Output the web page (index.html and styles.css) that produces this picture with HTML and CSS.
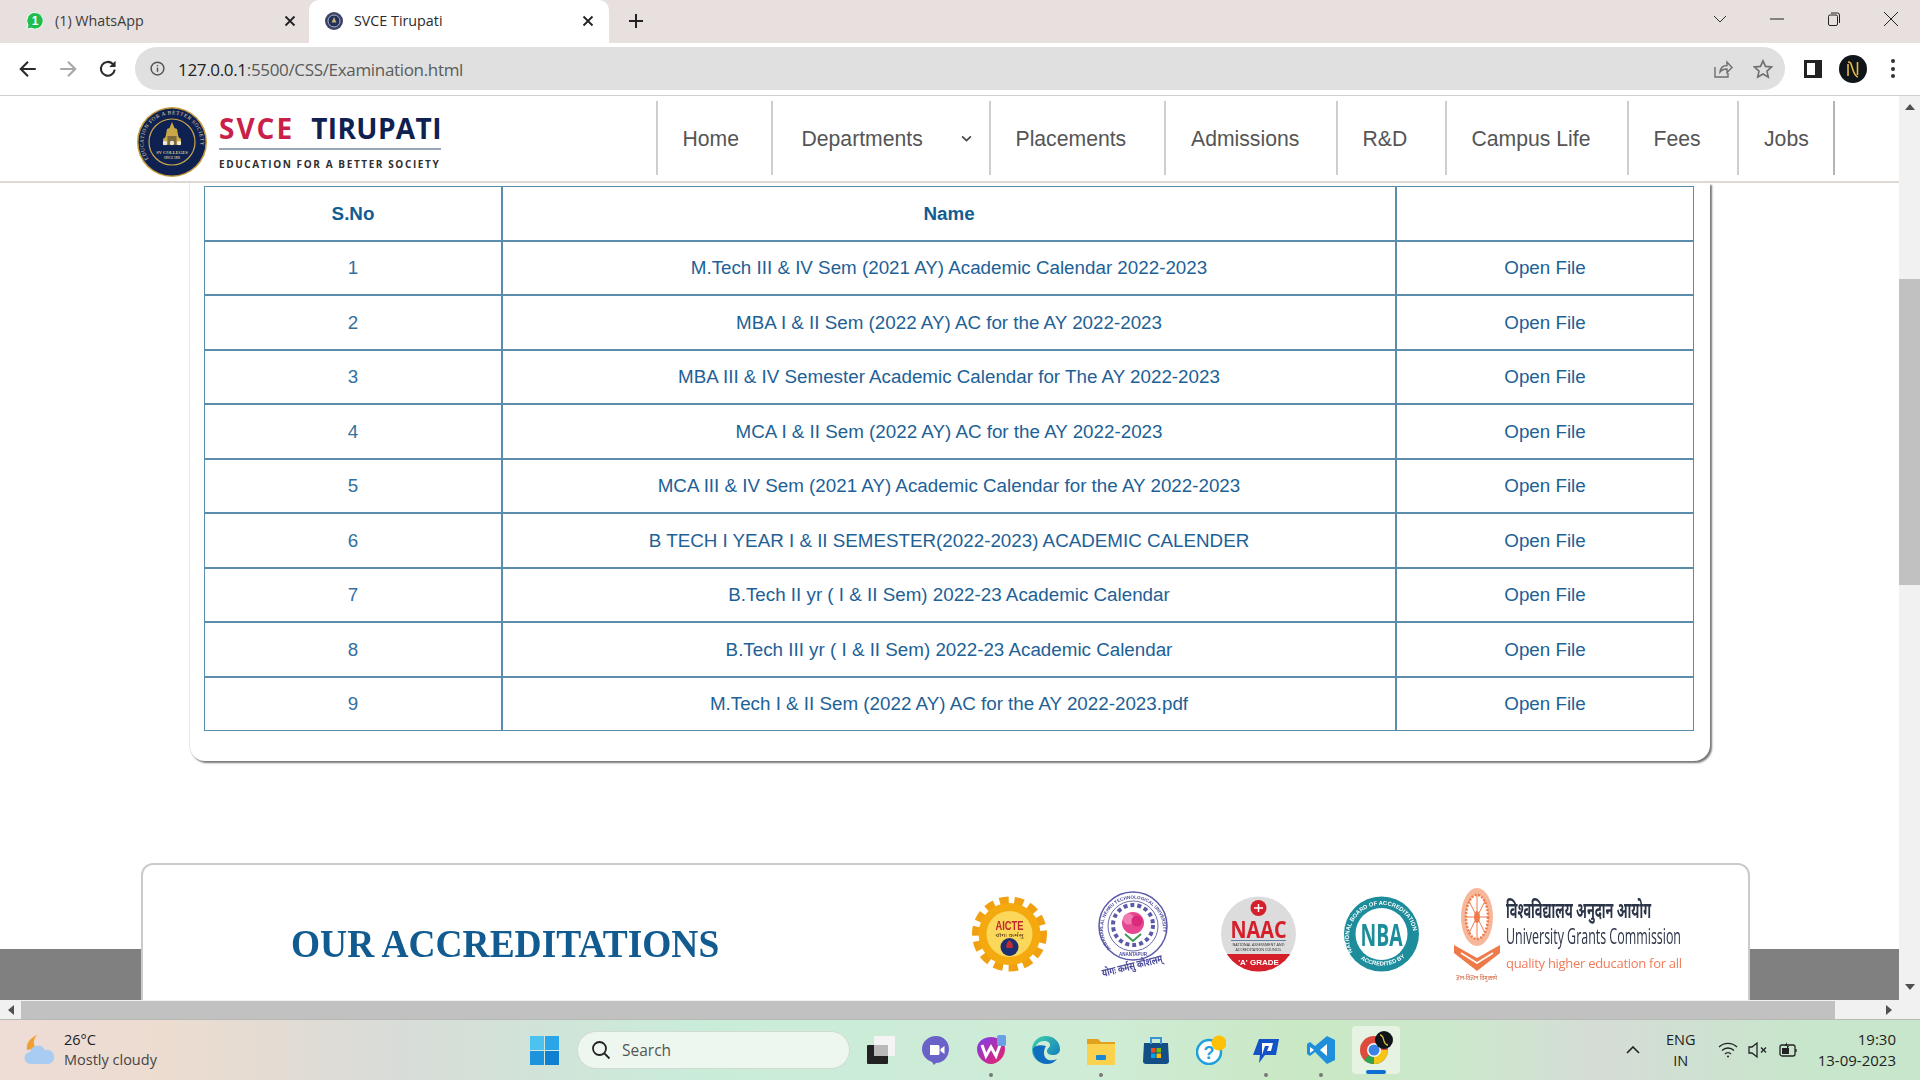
FILE: index.html
```html
<!DOCTYPE html>
<html lang="en">
<head>
<meta charset="utf-8">
<title>SVCE Tirupati</title>
<link rel="stylesheet" href="styles.css">
</head>
<body>
<div class="screen">
  <div class="tabstrip">
    <div class="tab tab-idle">
      <svg class="fav" viewBox="0 0 18 18"><path d="M9 .5a8.300 8.300 0 0 0-7 12.700L.8 17.300l4.200-1.200A8.300 8.300 0 1 0 9 .5z" fill="#1fbd4e" stroke="#f4fbf6" stroke-width="1"/><text x="9" y="13" class="fav-num">1</text></svg>
      <span class="tab-title">(1) WhatsApp</span>
      <svg class="tab-x" viewBox="0 0 12 12"><path d="M1.500 1.500l9 9M10.500 1.500l-9 9"/></svg>
    </div>
    <div class="tab tab-active">
      <svg class="fav" viewBox="0 0 18 18"><circle cx="9" cy="9" r="9" fill="#3b4568"/><circle cx="9" cy="9" r="6" fill="#22305a" stroke="#aab0c4" stroke-width="1"/><path d="M9 5l2.400 5.500H6.600z" fill="#c9b27a"/></svg>
      <span class="tab-title">SVCE Tirupati</span>
      <svg class="tab-x" viewBox="0 0 12 12"><path d="M1.500 1.500l9 9M10.500 1.500l-9 9"/></svg>
    </div>
    <svg class="tab-plus" viewBox="0 0 16 16"><path d="M8 1v14M1 8h14"/></svg>
    <div class="win">
      <svg class="win-caret" viewBox="0 0 14 8"><path d="M1 1l6 6 6-6"/></svg>
      <svg class="win-btn" viewBox="0 0 14 14"><path d="M0 7h14"/></svg>
      <svg class="win-btn" viewBox="0 0 14 14"><rect x="1.500" y="3" width="9" height="10.500" rx="1.500"/><path d="M4 1h6.500A2 2 0 0 1 12.500 3v8"/></svg>
      <svg class="win-btn" viewBox="0 0 14 14"><path d="M0 0l14 14M14 0L0 14"/></svg>
    </div>
  </div>

  <div class="toolbar">
    <div class="tool"><svg class="ic dark" viewBox="0 0 18 18"><path d="M16 9H2.500M9 2.500L2.500 9 9 15.500"/></svg></div>
    <div class="tool"><svg class="ic muted" viewBox="0 0 18 18"><path d="M2 9h13.500M9 2.500L15.500 9 9 15.500"/></svg></div>
    <div class="tool"><svg class="ic dark" viewBox="0 0 18 18"><path d="M15 9.500A6.200 6.200 0 1 1 13.300 4.500"/><path class="fill" d="M15.800 1.500v5.700h-5.700z"/></svg></div>
    <div class="address">
      <svg class="info" viewBox="0 0 16 16"><circle cx="8" cy="8" r="6.800"/><path d="M8 7v4.500M8 4.300v1.400"/></svg>
      <span class="url"><span class="url-host">127.0.0.1</span>:5500/CSS/Examination.html</span>
      <svg class="addr-ic" viewBox="0 0 20 20"><path d="M2 8v10h13v-4M7 13c.5-4 3-6.500 7-6.500V3l5 5.500-5 5V10c-3 0-5.500 1-7 3z"/></svg>
      <svg class="addr-ic star" viewBox="0 0 20 20"><path d="M10 1.800l2.500 5.600 6 .6-4.500 4.100 1.300 6L10 15l-5.300 3.100 1.300-6L1.500 8l6-.6z"/></svg>
    </div>
    <div class="tool"><svg class="panel" viewBox="0 0 18 18"><path d="M0 0h18v18H0zM3 3v12h8V3z" fill-rule="evenodd"/></svg></div>
    <div class="tool"><svg class="avatar" viewBox="0 0 28 28"><circle cx="14" cy="14" r="14" fill="#10151a"/><path d="M9 7c3 0 3 2 4.500 6.500S16 21.500 19 22M18.500 7v13M9 21V9" fill="none" stroke="#e3b93f" stroke-width="1.600"/></svg></div>
    <div class="tool"><span class="dots"><i></i><i></i><i></i></span></div>
  </div>

  <div class="viewport">
    <div class="page">
      <header class="site-head">
        <div class="logo">
          <svg class="seal" viewBox="0 0 70 70">
            <circle cx="35" cy="35" r="35" fill="#c39b3a"/>
            <circle cx="35" cy="35" r="33.500" fill="#0e2150"/>
            <circle cx="35" cy="35" r="23" fill="#0e2150" stroke="#c9a748" stroke-width="1.200"/>
            <path d="M35 15l2.500 6 2.500 1 1.500 8 2.500 2v6H26v-6l2.500-2 1.500-8 2.500-1z" fill="#c9a748"/>
            <path d="M30.500 29h9v9h-9z" fill="#7d6a3a"/>
            <circle cx="28" cy="36" r="2.200" fill="#efe9d6"/><circle cx="35" cy="36" r="2.200" fill="#efe9d6"/><circle cx="42" cy="36" r="2.200" fill="#efe9d6"/>
            <text x="35" y="47" class="seal-txt">SV COLLEGES</text>
            <text x="35" y="52" class="seal-txt small">SINCE 1993</text>
            <path id="sealArc" d="M14 55a28.500 28.500 0 1 1 42 0" fill="none"/>
            <text class="seal-ring"><textPath href="#sealArc" startOffset="4">EDUCATION FOR A BETTER SOCIETY</textPath></text>
          </svg>
          <div class="wordmark">
            <div class="wm-top"><span class="wm-red">SVCE</span><span class="wm-navy">TIRUPATI</span></div>
            <div class="wm-rule"></div>
            <div class="wm-tag">EDUCATION FOR A BETTER SOCIETY</div>
          </div>
        </div>
        <nav class="nav">
          <a class="nav-item">Home</a>
          <a class="nav-item nav-drop">Departments<svg class="chev" viewBox="0 0 10 6"><path d="M1 1l4 4 4-4"/></svg></a>
          <a class="nav-item">Placements</a>
          <a class="nav-item">Admissions</a>
          <a class="nav-item">R&amp;D</a>
          <a class="nav-item">Campus Life</a>
          <a class="nav-item">Fees</a>
          <a class="nav-item nav-last">Jobs</a>
        </nav>
      </header>

      <section class="card">
        <table class="files">
          <thead>
            <tr><th class="c-no">S.No</th><th class="c-name">Name</th><th class="c-open"></th></tr>
          </thead>
          <tbody>
            <tr><td>1</td><td>M.Tech III &amp; IV Sem (2021 AY) Academic Calendar 2022-2023</td><td>Open File</td></tr>
            <tr><td>2</td><td>MBA I &amp; II Sem (2022 AY) AC for the AY 2022-2023</td><td>Open File</td></tr>
            <tr><td>3</td><td>MBA III &amp; IV Semester Academic Calendar for The AY 2022-2023</td><td>Open File</td></tr>
            <tr><td>4</td><td>MCA I &amp; II Sem (2022 AY) AC for the AY 2022-2023</td><td>Open File</td></tr>
            <tr><td>5</td><td>MCA III &amp; IV Sem (2021 AY) Academic Calendar for the AY 2022-2023</td><td>Open File</td></tr>
            <tr><td>6</td><td>B TECH I YEAR I &amp; II SEMESTER(2022-2023) ACADEMIC CALENDER</td><td>Open File</td></tr>
            <tr><td>7</td><td>B.Tech II yr ( I &amp; II Sem) 2022-23 Academic Calendar</td><td>Open File</td></tr>
            <tr><td>8</td><td>B.Tech III yr ( I &amp; II Sem) 2022-23 Academic Calendar</td><td>Open File</td></tr>
            <tr><td>9</td><td>M.Tech I &amp; II Sem (2022 AY) AC for the AY 2022-2023.pdf</td><td>Open File</td></tr>
          </tbody>
        </table>
      </section>

      <div class="lower">
        <section class="accred">
          <h2 class="accred-title">OUR ACCREDITATIONS</h2>
          <div class="accred-logos">
            <svg class="alogo aicte" viewBox="0 0 75 94">
              <circle cx="37.500" cy="47" r="33" fill="none" stroke="#f0a010" stroke-width="9" stroke-dasharray="9 5.550"/>
              <circle cx="37.500" cy="47" r="31" fill="#f4a90f"/>
              <circle cx="37.500" cy="47" r="23" fill="#fbd75a"/>
              <text x="37.500" y="43" class="aicte-txt" textLength="28" lengthAdjust="spacingAndGlyphs">AICTE</text>
              <text x="37.500" y="49.500" class="tiny-txt" textLength="28" lengthAdjust="spacingAndGlyphs">योगः कर्मसु</text>
              <circle cx="37.500" cy="60" r="9" fill="#1b2f74"/>
              <path d="M37.500 53c3 3 4 5 3 8h-6c-1-3 0-5 3-8z" fill="#c62c2c"/>
            </svg>
            <svg class="alogo jntu" viewBox="0 0 72 94">
              <circle cx="36" cy="39" r="34" fill="#fff" stroke="#5a5aa8" stroke-width="1.500"/>
              <circle cx="36" cy="39" r="25" fill="#fff" stroke="#6a6ab0" stroke-width="1"/>
              <circle cx="36" cy="38" r="20" fill="none" stroke="#5a5aa8" stroke-width="4" stroke-dasharray="4 3"/>
              <circle cx="36" cy="36" r="11" fill="#e6468f"/>
              <circle cx="31.500" cy="32" r="5.500" fill="#f07cb2"/><circle cx="40" cy="34" r="5.500" fill="#d92a7c"/>
              <path d="M28 47l8 7 8-7" fill="none" stroke="#3e9a55" stroke-width="2"/>
              <path id="jntuArc" d="M14 62a30 30 0 1 1 44 0" fill="none"/>
              <text class="ring-txt jntu-ring"><textPath href="#jntuArc">JAWAHARLAL NEHRU TECHNOLOGICAL UNIVERSITY</textPath></text>
              <text x="36" y="69" class="ring-txt jntu-small">ANANTAPUR</text>
              <text transform="translate(6 90) rotate(-14)" class="jntu-hi" textLength="62" lengthAdjust="spacingAndGlyphs">योगः कर्मसु कौशलम्</text>
            </svg>
            <svg class="alogo naac" viewBox="0 0 75 94">
              <defs><clipPath id="naacClip"><circle cx="37.500" cy="47" r="37.500"/></clipPath></defs>
              <g clip-path="url(#naacClip)">
                <rect y="9" width="75" height="76" fill="#dcdcdc"/>
                <rect y="67" width="75" height="19" fill="#d5202c"/>
              </g>
              <circle cx="37.500" cy="21" r="8" fill="#d5202c"/><path d="M33 21h9M37.500 17v8" stroke="#fff" stroke-width="1.500"/>
              <text x="37.500" y="50.500" class="naac-txt" textLength="56" lengthAdjust="spacingAndGlyphs">NAAC</text>
              <rect x="10" y="53" width="55" height="1" fill="#6a7fa8"/>
              <text x="37.500" y="59" class="tiny-txt naac-sm" textLength="52" lengthAdjust="spacingAndGlyphs">NATIONAL ASSESSMENT AND</text>
              <text x="37.500" y="64" class="tiny-txt naac-sm" textLength="46" lengthAdjust="spacingAndGlyphs">ACCREDITATION COUNCIL</text>
              <text x="37.500" y="78" class="naac-grade">'A' GRADE</text>
            </svg>
            <svg class="alogo nba" viewBox="0 0 77 94">
              <circle cx="38.500" cy="47" r="37.500" fill="#1d8d9c"/>
              <circle cx="38.500" cy="47" r="26" fill="#fff"/>
              <text x="38.500" y="59" class="nba-txt" textLength="42" lengthAdjust="spacingAndGlyphs">NBA</text>
              <path id="nbaArc" d="M10 66a32.500 32.500 0 1 1 57 0" fill="none"/>
              <text class="ring-txt nba-ring"><textPath href="#nbaArc" startOffset="1">NATIONAL BOARD OF ACCREDITATION</textPath></text>
              <path id="nbaArc2" d="M13 68a36 36 0 0 0 51 0" fill="none"/>
              <text class="ring-txt nba-ring"><textPath href="#nbaArc2" startOffset="6">ACCREDITED BY</textPath></text>
            </svg>
            <svg class="alogo ugc" viewBox="0 0 229 94">
              <ellipse cx="24" cy="30" rx="16" ry="29" fill="#f7b79a"/>
              <ellipse cx="24" cy="30" rx="11" ry="22" fill="#fff" stroke="#ee7a4a" stroke-width="2.500" stroke-dasharray="2 1.500"/>
              <path d="M24 8v44M13 30h22M16 14l16 32M32 14L16 46" stroke="#ee7a4a" stroke-width="1"/>
              <ellipse cx="24" cy="30" rx="3" ry="6" fill="#ee7a4a"/>
              <path d="M1 58l23 13 23-13v8L24 84 1 66z" fill="#ee7a4a"/>
              <path d="M8 66l16 10 16-10" stroke="#fff" stroke-width="1.500" fill="none"/>
              <text x="53" y="31" class="ugc-hi" textLength="145" lengthAdjust="spacingAndGlyphs">विश्वविद्यालय अनुदान आयोग</text>
              <text x="53" y="57" class="ugc-en" textLength="175" lengthAdjust="spacingAndGlyphs">University Grants Commission</text>
              <text x="53" y="81" class="ugc-tag" textLength="176" lengthAdjust="spacing">quality higher education for all</text>
              <text x="3" y="93" class="ugc-foot" textLength="41" lengthAdjust="spacingAndGlyphs">ज्ञान-विज्ञान विमुक्तये</text>
            </svg>
          </div>
        </section>
      </div>
    </div>

    <aside class="vscroll">
      <svg class="arrow" viewBox="0 0 10 6"><path d="M5 0l5 6H0z"/></svg>
      <div class="vthumb"></div>
      <svg class="arrow arrow-end" viewBox="0 0 10 6"><path d="M0 0h10L5 6z"/></svg>
    </aside>
  </div>

  <div class="hscroll">
    <div class="harrow"><svg viewBox="0 0 6 10"><path d="M6 0v10L0 5z"/></svg></div>
    <div class="hthumb"></div>
    <div class="harrow harrow-end"><svg viewBox="0 0 6 10"><path d="M0 0l6 5-6 5z"/></svg></div>
  </div>

  <footer class="taskbar">
    <div class="weather">
      <svg class="wx" viewBox="0 0 32 32"><path d="M13 1c-4 5-4 9-1 13l-9 2c-1-7 3-12 10-15z" fill="#f0a030"/><path d="M7 30a6 6 0 0 1-1-12 8 8 0 0 1 15-2 7 7 0 0 1 4 14z" fill="#a9cdf2"/></svg>
      <div class="wx-text"><span class="wx-temp">26°C</span><span class="wx-desc">Mostly cloudy</span></div>
    </div>
    <div class="apps">
      <svg class="start" viewBox="0 0 29 29"><path d="M0 0h14v14H0z" fill="#4cc2f1"/><path d="M15 0h14v14H15z" fill="#2aa6e8"/><path d="M0 15h14v14H0z" fill="#1b93dd"/><path d="M15 15h14v14H15z" fill="#0f7fd0"/></svg>
      <div class="search">
        <svg class="search-ic" viewBox="0 0 20 20"><circle cx="8.500" cy="8.500" r="6.500"/><path d="M13.500 13.500L18.500 18.500"/></svg>
        <span>Search</span>
      </div>
      <div class="app"><svg viewBox="0 0 30 30"><rect x="8" y="1" width="21" height="20" rx="1" fill="#f4f4f4"/><rect x="1" y="10" width="21" height="19" rx="1" fill="#222"/><rect x="8" y="10" width="14" height="11" fill="#b9b9b9"/></svg></div>
      <div class="app"><svg viewBox="0 0 30 30"><path d="M15 1c8 0 13 6 13 13s-5 14-13 14l-2 2-2-3C5 25 1 20 1 14 1 7 7 1 15 1z" fill="#6a62c8"/><path d="M9 10h8a1.500 1.500 0 0 1 1.500 1.500v7A1.500 1.500 0 0 1 17 20H9zM19.500 14l4-3v8l-4-3z" fill="#fff"/></svg></div>
      <div class="app app-on"><svg viewBox="0 0 30 30"><defs><linearGradient id="wps" x1="0" y1="0" x2="1" y2="1"><stop offset="0" stop-color="#7b3ff0"/><stop offset="1" stop-color="#ee1f62"/></linearGradient></defs><path d="M15 2c8 0 14 5 14 12 0 8-7 15-14 15S1 22 1 14C1 7 7 2 15 2z" fill="url(#wps)"/><path d="M6 10l4 11 5-9 5 9 4-11" fill="none" stroke="#fff" stroke-width="3"/><rect x="21" y="0" width="9" height="11" rx="2" fill="#6d9fe8"/></svg></div>
      <div class="app"><svg viewBox="0 0 30 30"><defs><linearGradient id="edge" x1="0" y1="0" x2="1" y2="1"><stop offset="0" stop-color="#3ed4a8"/><stop offset="1" stop-color="#0f6fc4"/></linearGradient></defs><path d="M15 1c8 0 14 6 14 13 0 4-3 6-7 6-3 0-6-1-6-4s3-3 3-6c0-2-2-4-6-4-6 0-9 5-9 9 0 7 6 14 13 14-9 0-16-6-16-14S7 1 15 1z" fill="url(#edge)"/><path d="M2 14c0 8 6 15 14 15 4 0 8-2 10-5-6 3-13 1-13-6 0-4 2-7 2-7-6-2-12 0-13 3z" fill="#0f6ebd"/></svg></div>
      <div class="app app-on"><svg viewBox="0 0 30 30"><path d="M1 4h11l3 3h14v5H1z" fill="#e0a21c"/><path d="M1 9h28v21H1z" fill="#fbd24e"/><rect x="10" y="20" width="10" height="5" rx="1" fill="#1a86d8"/></svg></div>
      <div class="app"><svg viewBox="0 0 30 30"><path d="M3 8h24l1 18a3 3 0 0 1-3 3H5a3 3 0 0 1-3-3z" fill="#134f86"/><path d="M10 9V3h10v6" fill="none" stroke="#3b93d6" stroke-width="2"/><rect x="10" y="13" width="4.500" height="4.500" fill="#f25022"/><rect x="15.500" y="13" width="4.500" height="4.500" fill="#7fba00"/><rect x="10" y="18.500" width="4.500" height="4.500" fill="#00a4ef"/><rect x="15.500" y="18.500" width="4.500" height="4.500" fill="#ffb900"/></svg></div>
      <div class="app"><svg viewBox="0 0 30 30"><circle cx="13" cy="17" r="12" fill="#fff" stroke="#1f9fdc" stroke-width="2.500"/><text x="13" y="24" class="help-q">?</text><circle cx="23" cy="8" r="7.500" fill="#ffc107"/></svg></div>
      <div class="app app-on"><svg viewBox="0 0 30 30"><path d="M8 4h20l-3 16H14l-6 8 1-8H2z" fill="#1452c8"/><path d="M11 8h11l-2 8h-4l2-5h-4l-3 9z" fill="#fff"/></svg></div>
      <div class="app app-on"><svg viewBox="0 0 30 30"><path d="M21 1l8 4v20l-8 4-12-12-5 4-3-2v-10l3-2 5 4z" fill="#1f8fdc"/><path d="M21 9l-7 6 7 6z" fill="#fff"/><path d="M4 12l4 3-4 3z" fill="#fff"/></svg></div>
      <div class="app app-active"><svg viewBox="0 0 34 34"><circle cx="15" cy="19" r="14" fill="#dd4b3c"/><path d="M15 19L27 26A14 14 0 0 1 5 29z" fill="#2ea44f"/><path d="M15 19l14 0A14 14 0 0 1 15 33z" fill="#f5c518"/><circle cx="15" cy="19" r="7" fill="#fff"/><circle cx="15" cy="19" r="5.500" fill="#3b82e6"/><circle cx="25" cy="9" r="9" fill="#10151a"/><path d="M21 4c3 0 3 3 4 6s2 4 4 4" fill="none" stroke="#e3b93f" stroke-width="1.300"/></svg></div>
    </div>
    <div class="tray">
      <svg class="tray-caret" viewBox="0 0 14 8"><path d="M1 7l6-6 6 6"/></svg>
      <div class="lang"><span>ENG</span><span>IN</span></div>
      <svg class="tray-ic" viewBox="0 0 20 18"><path d="M1 6a13 13 0 0 1 18 0M4 9.500a8.500 8.500 0 0 1 12 0M7 13a4 4 0 0 1 6 0"/><circle cx="10" cy="15.500" r="1" class="tray-fill"/></svg>
      <svg class="tray-ic" viewBox="0 0 20 18"><path d="M1 6v6h3l5 4V2L4 6zM13 6.500l5 5M18 6.500l-5 5"/></svg>
      <svg class="tray-ic" viewBox="0 0 20 18"><rect x="2" y="4" width="15" height="11" rx="2"/><path d="M18 8v3"/><path class="tray-fill" d="M4 7h7v6H4zM9 1L7 5h4L9 9z"/></svg>
      <div class="clock"><span>19:30</span><span>13-09-2023</span></div>
    </div>
  </footer>
</div>
</body>
</html>
```
FILE: styles.css
```css
* { box-sizing: border-box; }
html, body { margin: 0; height: 100%; overflow: hidden; }
body { font-family: "Liberation Sans", Arial, sans-serif; background: #fff; }
.screen { width: 1920px; height: 1080px; display: flex; flex-direction: column; overflow: hidden; }

/* tab strip */
.tabstrip { height: 43px; background: #e8dfdf; display: flex; align-items: stretch; flex: none; }
.tab { display: flex; align-items: center; font-family: "Open Sans", sans-serif; font-size: 14.300px; color: #3c3c3c; }
.tab-idle { width: 309px; padding: 0 13px 2px 26px; }
.tab-active { width: 300px; padding: 0 15px 2px 16px; background: #fff; border-radius: 10px 10px 0 0; color: #2a2a2a; }
.fav { width: 18px; height: 18px; margin-right: 11px; flex: none; }
.fav-num { font: bold 12px "Liberation Sans", sans-serif; fill: #fff; text-anchor: middle; }
.tab-x { width: 12px; height: 12px; margin-left: auto; fill: none; stroke: #222; stroke-width: 1.800; }
.tab-plus { width: 16px; height: 16px; align-self: center; margin: 0 0 2px 19px; fill: none; stroke: #222; stroke-width: 2; }
.win { margin-left: auto; display: flex; align-items: center; height: 38px; }
.win-caret { width: 14px; height: 8px; fill: none; stroke: #333; stroke-width: 1; margin-right: 43px; }
.win-btn { width: 14px; height: 14px; margin-right: 43px; fill: none; stroke: #222; stroke-width: 1; }
.win-btn:last-child { margin-right: 22px; }

/* toolbar */
.toolbar { height: 53px; flex: none; background: #fff; border-bottom: 1px solid #cfcfcf; display: flex; align-items: center; padding-left: 8px; padding-bottom: 1px; }
.tool { width: 40px; height: 40px; display: flex; align-items: center; justify-content: center; flex: none; }
.ic { width: 20px; height: 20px; fill: none; stroke-width: 1.900; }
.ic.dark { stroke: #2b2b2b; }
.ic.muted { stroke: #a8a8a8; }
.ic .fill { fill: #2b2b2b; stroke: none; }
.address { width: 1649.500px; height: 43px; margin: 0 8px 0 7px; flex: none; border-radius: 22px; background: #e0e0e0; display: flex; align-items: center; padding-left: 15px; }
.info { width: 15px; height: 15px; fill: none; stroke: #555; stroke-width: 1.600; flex: none; }
.url { margin-left: 13px; padding-top: 2px; font-family: "Open Sans", sans-serif; font-size: 17px; letter-spacing: -.33px; color: #5a5a5a; }
.url-host { color: #222; }
.addr-ic { width: 20px; height: 20px; fill: none; stroke: #6e6e6e; stroke-width: 1.400; flex: none; margin-left: auto; margin-right: 12px; }
.addr-ic.star { margin-left: 8px; margin-right: 12px; stroke-width: 1.600; }
.panel { width: 18px; height: 18px; fill: #222; }
.avatar { width: 28px; height: 28px; }
.dots { display: flex; flex-direction: column; gap: 3.500px; }
.dots i { width: 4px; height: 4px; border-radius: 50%; background: #333; display: block; }

/* viewport */
.viewport { height: 904px; flex: none; display: flex; }
.page { width: 1899px; flex: none; display: flex; flex-direction: column; overflow: hidden; background: #fff; }

/* site header */
.site-head { height: 87px; flex: none; display: flex; align-items: center; justify-content: space-between; border-bottom: 2px solid #ddd8d4; padding: 0 64px 2px 137px; }
.logo { display: flex; align-items: center; padding-top: 8px; }
.seal { width: 70px; height: 70px; flex: none; }
.seal-txt { font: bold 4.500px "Liberation Serif", serif; fill: #d8c98e; text-anchor: middle; }
.seal-txt.small { font-size: 3px; }
.seal-ring { font: 5.300px "Liberation Serif", serif; fill: #e7dcae; letter-spacing: .6px; }
.wordmark { margin-left: 12px; width: 222px; }
.wm-top { font-family: "Open Sans", sans-serif; font-weight: 700; font-size: 28px; line-height: 30px; display: flex; white-space: nowrap; }
.wm-red { color: #c91f4a; margin-right: 17px; letter-spacing: 2px; }
.wm-navy { color: #0e2150; letter-spacing: .4px; }
.wm-rule { height: 2px; background: #9aa6b8; margin-top: 4.500px; }
.wm-tag { font-family: "Open Sans", sans-serif; font-weight: 700; font-size: 10px; letter-spacing: 1.600px; color: #2f2f2f; margin-top: 8px; white-space: nowrap; line-height: 12px; }

.nav { height: 74px; display: grid; grid-template-columns: 115px 218px 175.500px 171.500px 109px 182px 110.500px 98px; }
.nav-item { border-left: 2px solid #d3cccc; padding: 2px 0 0 25px; display: flex; align-items: center; font-size: 21.200px; color: #555; }
.nav-last { border-right: 2px solid #b9b2b2; }
.nav-drop { position: relative; padding-left: 29px; }
.chev { position: absolute; right: 17px; top: 34px; width: 11px; height: 7px; fill: none; stroke: #444; stroke-width: 1.500; }

/* table card */
.card { margin-left: 189px; width: 1521px; flex: none; padding: 3px 0 30px 14px; background: #fff; border-left: 1px solid #e6e6e6; border-radius: 0 0 16px 16px; box-shadow: 2px 2px 2px #777; }
.files { width: 1490px; table-layout: fixed; border-spacing: 0; font-size: 18.800px; color: #1d6196; text-align: center; }
.files th, .files td { border: 1px solid #5c8cab; padding: 1px 0 0; }
.files tr { height: 54.500px; }
.files th { color: #135c92; font-weight: 700; }
.c-no { width: 298px; }
.c-name { width: 894px; }
.c-open { width: 298px; }
.files td:first-child { color: #33709f; }

/* accreditations */
.lower { margin-top: 102px; flex: 1; min-height: 0; padding: 0 149px 0 141px; background: linear-gradient(#fff 86px, #808080 86px); overflow: hidden; }
.accred { height: 160px; background: #fff; border: 2px solid #cfcaca; border-radius: 12px 12px 0 0; padding-left: 148px; display: flex; align-items: flex-start; }
.accred-title { margin: 56px 0 0; width: 681px; flex: none; font: bold 40px/46px "Liberation Serif", serif; transform: scaleX(.936); transform-origin: left center; color: #125b90; white-space: nowrap; }
.accred-logos { margin-top: 22px; display: grid; grid-template-columns: 124.600px 124.600px 121.400px 110px 229px; filter: blur(.35px); }
.alogo { height: 94px; display: block; overflow: visible; }
.aicte { width: 75px; }
.jntu { width: 72px; }
.naac { width: 75px; }
.nba { width: 77px; }
.ugc { width: 229px; }
.aicte-txt { font: bold 13px "Liberation Sans", sans-serif; fill: #c0272d; text-anchor: middle; }
.tiny-txt { font: 5px "Noto Sans", sans-serif; fill: #5a3a10; text-anchor: middle; }
.ring-txt { font: bold 6px "Liberation Sans", sans-serif; }
.jntu-ring { fill: #4a4a9a; font-size: 4.600px; }
.jntu-small { fill: #4a4a9a; font-size: 4.500px; text-anchor: middle; }
.jntu-hi { font: 700 11px "Noto Sans", sans-serif; fill: #4a4a9a; }
.naac-txt { font: 700 23px "Open Sans", sans-serif; fill: #d5202c; text-anchor: middle; }
.naac-sm { font-size: 4px; fill: #333; }
.naac-grade { font: bold 8px "Liberation Sans", sans-serif; fill: #fff; text-anchor: middle; }
.nba-txt { font: 700 30px "Open Sans", sans-serif; fill: #1d8d9c; text-anchor: middle; }
.nba-ring { fill: #fff; font-size: 5.800px; }
.ugc-hi { font: 700 22px "Noto Sans", sans-serif; fill: #2c3448; }
.ugc-en { font: 400 22px "Open Sans", sans-serif; fill: #2c3448; }
.ugc-tag { font: 400 13px "Open Sans", sans-serif; fill: #ee7a5a; }
.ugc-foot { font: 7px "Noto Sans", sans-serif; fill: #d0603a; }

/* scrollbars */
.vscroll { width: 21px; flex: none; background: #f1f1f1; display: flex; flex-direction: column; align-items: center; padding: 8px 0 10px; }
.arrow { width: 10px; height: 6px; fill: #505050; flex: none; }
.vthumb { width: 100%; height: 306px; background: #c1c1c1; margin-top: 169px; }
.arrow-end { margin-top: auto; }
.hscroll { height: 19px; flex: none; background: #f1f1f1; display: flex; padding-top: 1px; padding-right: 21px; }
.harrow { width: 21px; display: flex; align-items: center; justify-content: center; }
.harrow svg { width: 6px; height: 10px; fill: #505050; }
.hthumb { width: 1814px; background: #c1c1c1; }
.harrow-end { margin-left: auto; }

/* taskbar */
.taskbar { height: 61px; flex: none; border-top: 1px solid #b7b9b5; display: flex; align-items: center; font-family: "Open Sans", sans-serif; background: linear-gradient(90deg, #eedcd6 0, #ecdcd0 170px, #d8dcd8 400px, #c9ecd9 700px, #cfecd6 1100px, #c9e8c4 1300px, #cce8cc 1450px, #d5dcd6 1600px, #c8e6cc 1800px); color: #222; }
.weather { width: 530px; flex: none; display: flex; align-items: center; padding-left: 24px; }
.wx { width: 32px; height: 32px; }
.wx-text { display: flex; flex-direction: column; margin-left: 8px; font-size: 14.500px; line-height: 20px; }
.wx-desc { color: #444; }
.apps { display: flex; align-items: center; flex: none; }
.start { width: 29px; height: 29px; flex: none; margin-right: 18px; }
.search { width: 273px; height: 38px; border-radius: 19px; background: #eef7ef; border: 1px solid #cfdccf; display: flex; align-items: center; padding-left: 13px; margin-right: 3.500px; font-size: 15.500px; color: #555; }
.search-ic { width: 20px; height: 20px; fill: none; stroke: #222; stroke-width: 1.800; margin-right: 11px; }
.app { width: 55px; height: 58px; display: flex; align-items: center; justify-content: center; position: relative; flex: none; }
.app svg { width: 30px; height: 30px; }
.app-on::after { content: ""; position: absolute; left: 25.500px; bottom: 2px; width: 4px; height: 4px; border-radius: 50%; background: #777; }
.app-active { background: #e6f3e2; border-radius: 4px; width: 48px; height: 48px; margin: 0 3.500px; }
.app-active svg { width: 34px; height: 34px; margin-bottom: 4px; }
.app-active::after { content: ""; position: absolute; left: 14px; bottom: 0; width: 20px; height: 4px; border-radius: 2px; background: #0a6fd0; }
.help-q { font: bold 18px "Liberation Sans", sans-serif; fill: #1f9fdc; text-anchor: middle; }
.tray { margin-left: auto; display: flex; align-items: center; padding-right: 24px; font-size: 14.500px; }
.tray-caret { width: 14px; height: 8px; fill: none; stroke: #222; stroke-width: 1.600; margin-right: 21px; }
.lang { display: flex; flex-direction: column; align-items: center; line-height: 21px; width: 40px; margin-right: 17px; }
.tray-ic { width: 20px; height: 18px; fill: none; stroke: #222; stroke-width: 1.300; margin-right: 10px; }
.tray-fill { fill: #222; stroke: none; }
.clock { display: flex; flex-direction: column; align-items: flex-end; line-height: 21px; margin-left: 10px; font-size: 15px; }
```
